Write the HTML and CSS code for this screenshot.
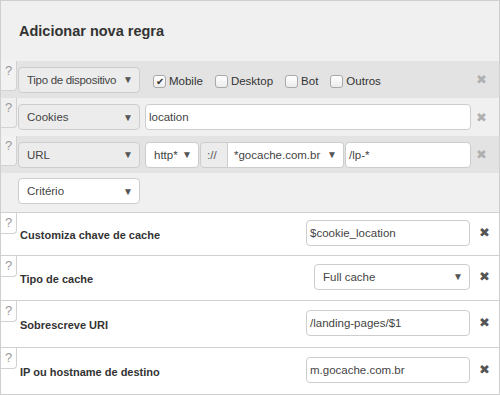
FILE: index.html
```html
<!DOCTYPE html>
<html lang="pt-BR">
<head>
    <meta charset="UTF-8">
    <meta name="viewport" content="width=device-width, initial-scale=1.0">
    <title>Adicionar nova regra</title>
    <link rel="stylesheet" href="styles.css">
</head>
<body>

    <div class="panel">
        <h2 class="panel-title">Adicionar nova regra</h2>

        <!-- condicoes -->
        <div class="cond-row shaded">
            <span class="help">?</span>
            <div class="select grey criteria"><span class="tight">Tipo de dispositivo</span><span class="caret">&#9660;</span></div>
            <div class="checks">
                <label class="check"><span class="box on">&#10004;</span>Mobile</label>
                <label class="check"><span class="box"></span>Desktop</label>
                <label class="check"><span class="box"></span>Bot</label>
                <label class="check"><span class="box"></span>Outros</label>
            </div>
            <span class="remove">&#10006;</span>
        </div>

        <div class="cond-row plain">
            <span class="help">?</span>
            <div class="select grey criteria"><span>Cookies</span><span class="caret">&#9660;</span></div>
            <div class="text-input grow">location</div>
            <span class="remove">&#10006;</span>
        </div>

        <div class="cond-row shaded">
            <span class="help">?</span>
            <div class="select grey criteria"><span>URL</span><span class="caret">&#9660;</span></div>
            <div class="url-group grow">
                <div class="select scheme"><span>http*</span><span class="caret">&#9660;</span></div>
                <span class="addon">://</span>
                <div class="select host"><span>*gocache.com.br</span><span class="caret">&#9660;</span></div>
                <div class="text-input grow">/lp-*</div>
            </div>
            <span class="remove">&#10006;</span>
        </div>

        <div class="cond-row last">
            <div class="select criteria"><span>Crit&eacute;rio</span><span class="caret">&#9660;</span></div>
        </div>

        <!-- acoes -->
        <div class="field h43">
            <span class="help">?</span>
            <span class="field-label">Customiza chave de cache</span>
            <div class="text-input value">$cookie_location</div>
            <span class="remove dark">&#10006;</span>
        </div>
        <div class="field h45">
            <span class="help">?</span>
            <span class="field-label">Tipo de cache</span>
            <div class="select cache-type"><span>Full cache</span><span class="caret">&#9660;</span></div>
            <span class="remove dark">&#10006;</span>
        </div>
        <div class="field h47">
            <span class="help">?</span>
            <span class="field-label">Sobrescreve URI</span>
            <div class="text-input value">/landing-pages/$1</div>
            <span class="remove dark">&#10006;</span>
        </div>
        <div class="field h47">
            <span class="help">?</span>
            <span class="field-label">IP ou hostname de destino</span>
            <div class="text-input value">m.gocache.com.br</div>
            <span class="remove dark">&#10006;</span>
        </div>
    </div>

</body>
</html>
```

FILE: styles.css
```css
body { margin: 0; font-family: "Liberation Sans", Arial, sans-serif; font-size: 11.5px; color: #333; background: #fff; }
.panel { width: 500px; height: 395px; box-sizing: border-box; border: 1px solid #cfcfcf; background: #f0f0f0; }
.panel-title { margin: 0; height: 60px; padding-left: 18px; display: flex; align-items: center; font-size: 14.5px; font-weight: bold; color: #333; }

/* condition rows */
.cond-row { display: flex; align-items: center; height: 37px; padding-right: 8px; }
.cond-row.plain { height: 38px; }
.cond-row.shaded { background: #e3e3e3; }
.cond-row.last { height: 39px; align-items: flex-start; padding-top: 5px; padding-left: 17px; box-sizing: border-box; }
.help { align-self: flex-start; width: 15px; height: 29px; border-right: 1px solid #d2d2d2; border-bottom: 1px solid #d2d2d2; border-bottom-right-radius: 4px; background: #f2f2f2; color: #9a9a9a; font-size: 13px; text-align: center; line-height: 19px; flex-shrink: 0; }
.cond-row.plain .help { background: #f0f0f0; }

.select { display: flex; align-items: center; justify-content: space-between; box-sizing: border-box; height: 26px; padding: 0 6px 0 8px; background: #fff; border: 1px solid #cdcdcd; border-radius: 4px; color: #444; white-space: nowrap; }
.select.grey { background: #ececec; }
.caret { font-size: 10px; color: #555; }
.tight { letter-spacing: -0.3px; }
.criteria { width: 122px; margin-left: 1px; padding-left: 8px; }
.cond-row.last .criteria { margin-left: 0; }

.text-input { box-sizing: border-box; height: 26px; line-height: 24px; padding: 0 3px; background: #fff; border: 1px solid #cdcdcd; border-radius: 4px; color: #444; white-space: nowrap; }
.grow { flex: 1; }
.cond-row .grow { margin-left: 5px; }

.checks { flex: 1; display: flex; align-items: center; margin: 3px 0 0 13px; gap: 12px; }
.check { display: flex; align-items: center; gap: 3px; color: #333; }
.box { width: 13px; height: 13px; box-sizing: border-box; border: 1px solid #a9a9a9; border-radius: 3px; background: linear-gradient(#fff, #ececec); font-size: 10px; line-height: 11px; text-align: center; color: #333; }

.url-group { display: flex; align-items: center; }
.url-group .scheme { width: 54px; padding-left: 8px; }
.addon { box-sizing: border-box; width: 28px; height: 26px; margin-left: 1px; line-height: 24px; padding-left: 6px; background: #ececec; border: 1px solid #cdcdcd; border-radius: 4px 0 0 4px; color: #555; }
.url-group .host { width: 116px; border-left: none; border-radius: 0 4px 4px 0; padding-left: 6px; }
.url-group .grow { margin-left: 1px; }

.remove { width: 20px; text-align: center; font-size: 13px; color: #b0b0b0; flex-shrink: 0; }

/* action fields */
.field { display: flex; align-items: center; box-sizing: border-box; border-top: 1px solid #cfcfcf; background: #fff; }
.field.h43 { height: 43px; }
.field.h45 { height: 45px; }
.field.h47 { height: 47px; }
.field .help { height: 20px; background: #fff; line-height: 19px; }
.field-label { flex: 1; margin-left: 3px; margin-top: 2px; font-size: 11px; font-weight: bold; color: #333; }
.field .value { width: 164px; margin-bottom: 3px; }
.cache-type { width: 156px; margin-bottom: 3px; }
.remove.dark { width: 29px; font-size: 13px; color: #555; margin-bottom: 3px; }
```
